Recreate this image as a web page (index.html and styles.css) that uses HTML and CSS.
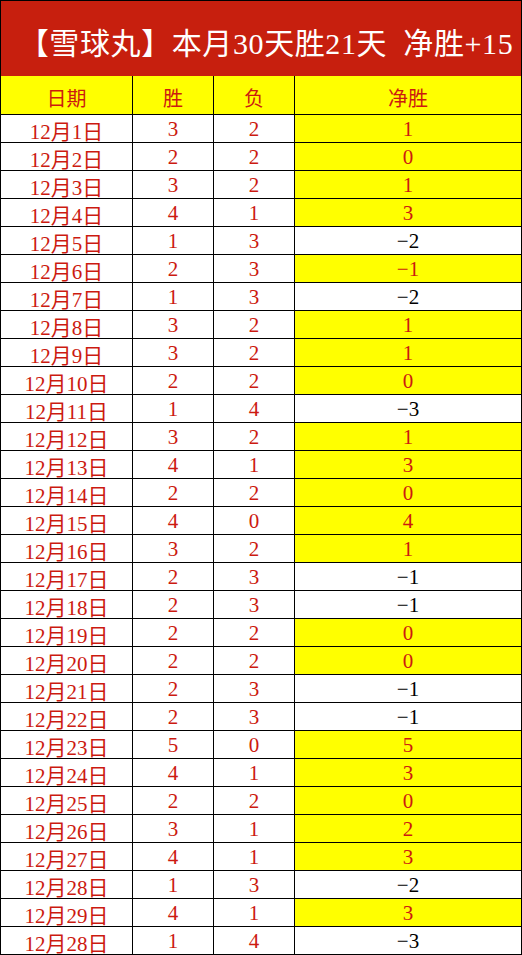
FILE: index.html
```html
<!DOCTYPE html>
<html lang="zh">
<head>
<meta charset="utf-8">
<title>雪球丸</title>
<link rel="stylesheet" href="styles.css">
</head>
<body>
<div class="sheet">
  <div class="title">【雪球丸】本月30天胜21天&nbsp;&nbsp;净胜+15</div>
  <div class="grid">
    <div class="cell head">日期</div><div class="cell head">胜</div><div class="cell head">负</div><div class="cell head">净胜</div>
    <div class="cell">12月1日</div><div class="cell">3</div><div class="cell">2</div><div class="cell hl">1</div>
    <div class="cell">12月2日</div><div class="cell">2</div><div class="cell">2</div><div class="cell hl">0</div>
    <div class="cell">12月3日</div><div class="cell">3</div><div class="cell">2</div><div class="cell hl">1</div>
    <div class="cell">12月4日</div><div class="cell">4</div><div class="cell">1</div><div class="cell hl">3</div>
    <div class="cell">12月5日</div><div class="cell">1</div><div class="cell">3</div><div class="cell neg">−2</div>
    <div class="cell">12月6日</div><div class="cell">2</div><div class="cell">3</div><div class="cell hl">−1</div>
    <div class="cell">12月7日</div><div class="cell">1</div><div class="cell">3</div><div class="cell neg">−2</div>
    <div class="cell">12月8日</div><div class="cell">3</div><div class="cell">2</div><div class="cell hl">1</div>
    <div class="cell">12月9日</div><div class="cell">3</div><div class="cell">2</div><div class="cell hl">1</div>
    <div class="cell">12月10日</div><div class="cell">2</div><div class="cell">2</div><div class="cell hl">0</div>
    <div class="cell">12月11日</div><div class="cell">1</div><div class="cell">4</div><div class="cell neg">−3</div>
    <div class="cell">12月12日</div><div class="cell">3</div><div class="cell">2</div><div class="cell hl">1</div>
    <div class="cell">12月13日</div><div class="cell">4</div><div class="cell">1</div><div class="cell hl">3</div>
    <div class="cell">12月14日</div><div class="cell">2</div><div class="cell">2</div><div class="cell hl">0</div>
    <div class="cell">12月15日</div><div class="cell">4</div><div class="cell">0</div><div class="cell hl">4</div>
    <div class="cell">12月16日</div><div class="cell">3</div><div class="cell">2</div><div class="cell hl">1</div>
    <div class="cell">12月17日</div><div class="cell">2</div><div class="cell">3</div><div class="cell neg">−1</div>
    <div class="cell">12月18日</div><div class="cell">2</div><div class="cell">3</div><div class="cell neg">−1</div>
    <div class="cell">12月19日</div><div class="cell">2</div><div class="cell">2</div><div class="cell hl">0</div>
    <div class="cell">12月20日</div><div class="cell">2</div><div class="cell">2</div><div class="cell hl">0</div>
    <div class="cell">12月21日</div><div class="cell">2</div><div class="cell">3</div><div class="cell neg">−1</div>
    <div class="cell">12月22日</div><div class="cell">2</div><div class="cell">3</div><div class="cell neg">−1</div>
    <div class="cell">12月23日</div><div class="cell">5</div><div class="cell">0</div><div class="cell hl">5</div>
    <div class="cell">12月24日</div><div class="cell">4</div><div class="cell">1</div><div class="cell hl">3</div>
    <div class="cell">12月25日</div><div class="cell">2</div><div class="cell">2</div><div class="cell hl">0</div>
    <div class="cell">12月26日</div><div class="cell">3</div><div class="cell">1</div><div class="cell hl">2</div>
    <div class="cell">12月27日</div><div class="cell">4</div><div class="cell">1</div><div class="cell hl">3</div>
    <div class="cell">12月28日</div><div class="cell">1</div><div class="cell">3</div><div class="cell neg">−2</div>
    <div class="cell">12月29日</div><div class="cell">4</div><div class="cell">1</div><div class="cell hl">3</div>
    <div class="cell">12月28日</div><div class="cell">1</div><div class="cell">4</div><div class="cell neg">−3</div>
  </div>
</div>
</body>
</html>
```
FILE: styles.css
```css
html, body {
  margin: 0;
  padding: 0;
  background: #ffffff;
}
.sheet {
  width: 522px;
  box-sizing: border-box;
  font-family: "Liberation Serif", "Noto Sans CJK SC", serif;
}
.title {
  border: 1px solid #000;
  border-bottom: none;
  background: #c71f0e;
  color: #ffffff;
  font-size: 30px;
  letter-spacing: 0.6px;
  padding-top: 10px;
  height: 65px;
  line-height: 65px;
  text-align: center;
  white-space: nowrap;
  padding-left: 10px;
}
.grid {
  display: grid;
  grid-template-columns: 132px 81px 81px 227px;
  grid-template-rows: 39px;
  grid-auto-rows: 28px;
  border-left: 1px solid #000;
}
.cell {
  border-right: 1px solid #000;
  border-bottom: 1px solid #000;
  display: flex;
  align-items: center;
  justify-content: center;
  font-size: 21px;
  color: #cc1a10;
  padding-top: 2px;
  box-sizing: border-box;
  white-space: nowrap;
}
.head {
  background: #ffff00;
  font-size: 20px;
  padding-top: 4px;
}
.hl {
  background: #ffff00;
}
.neg {
  color: #000000;
}
```
